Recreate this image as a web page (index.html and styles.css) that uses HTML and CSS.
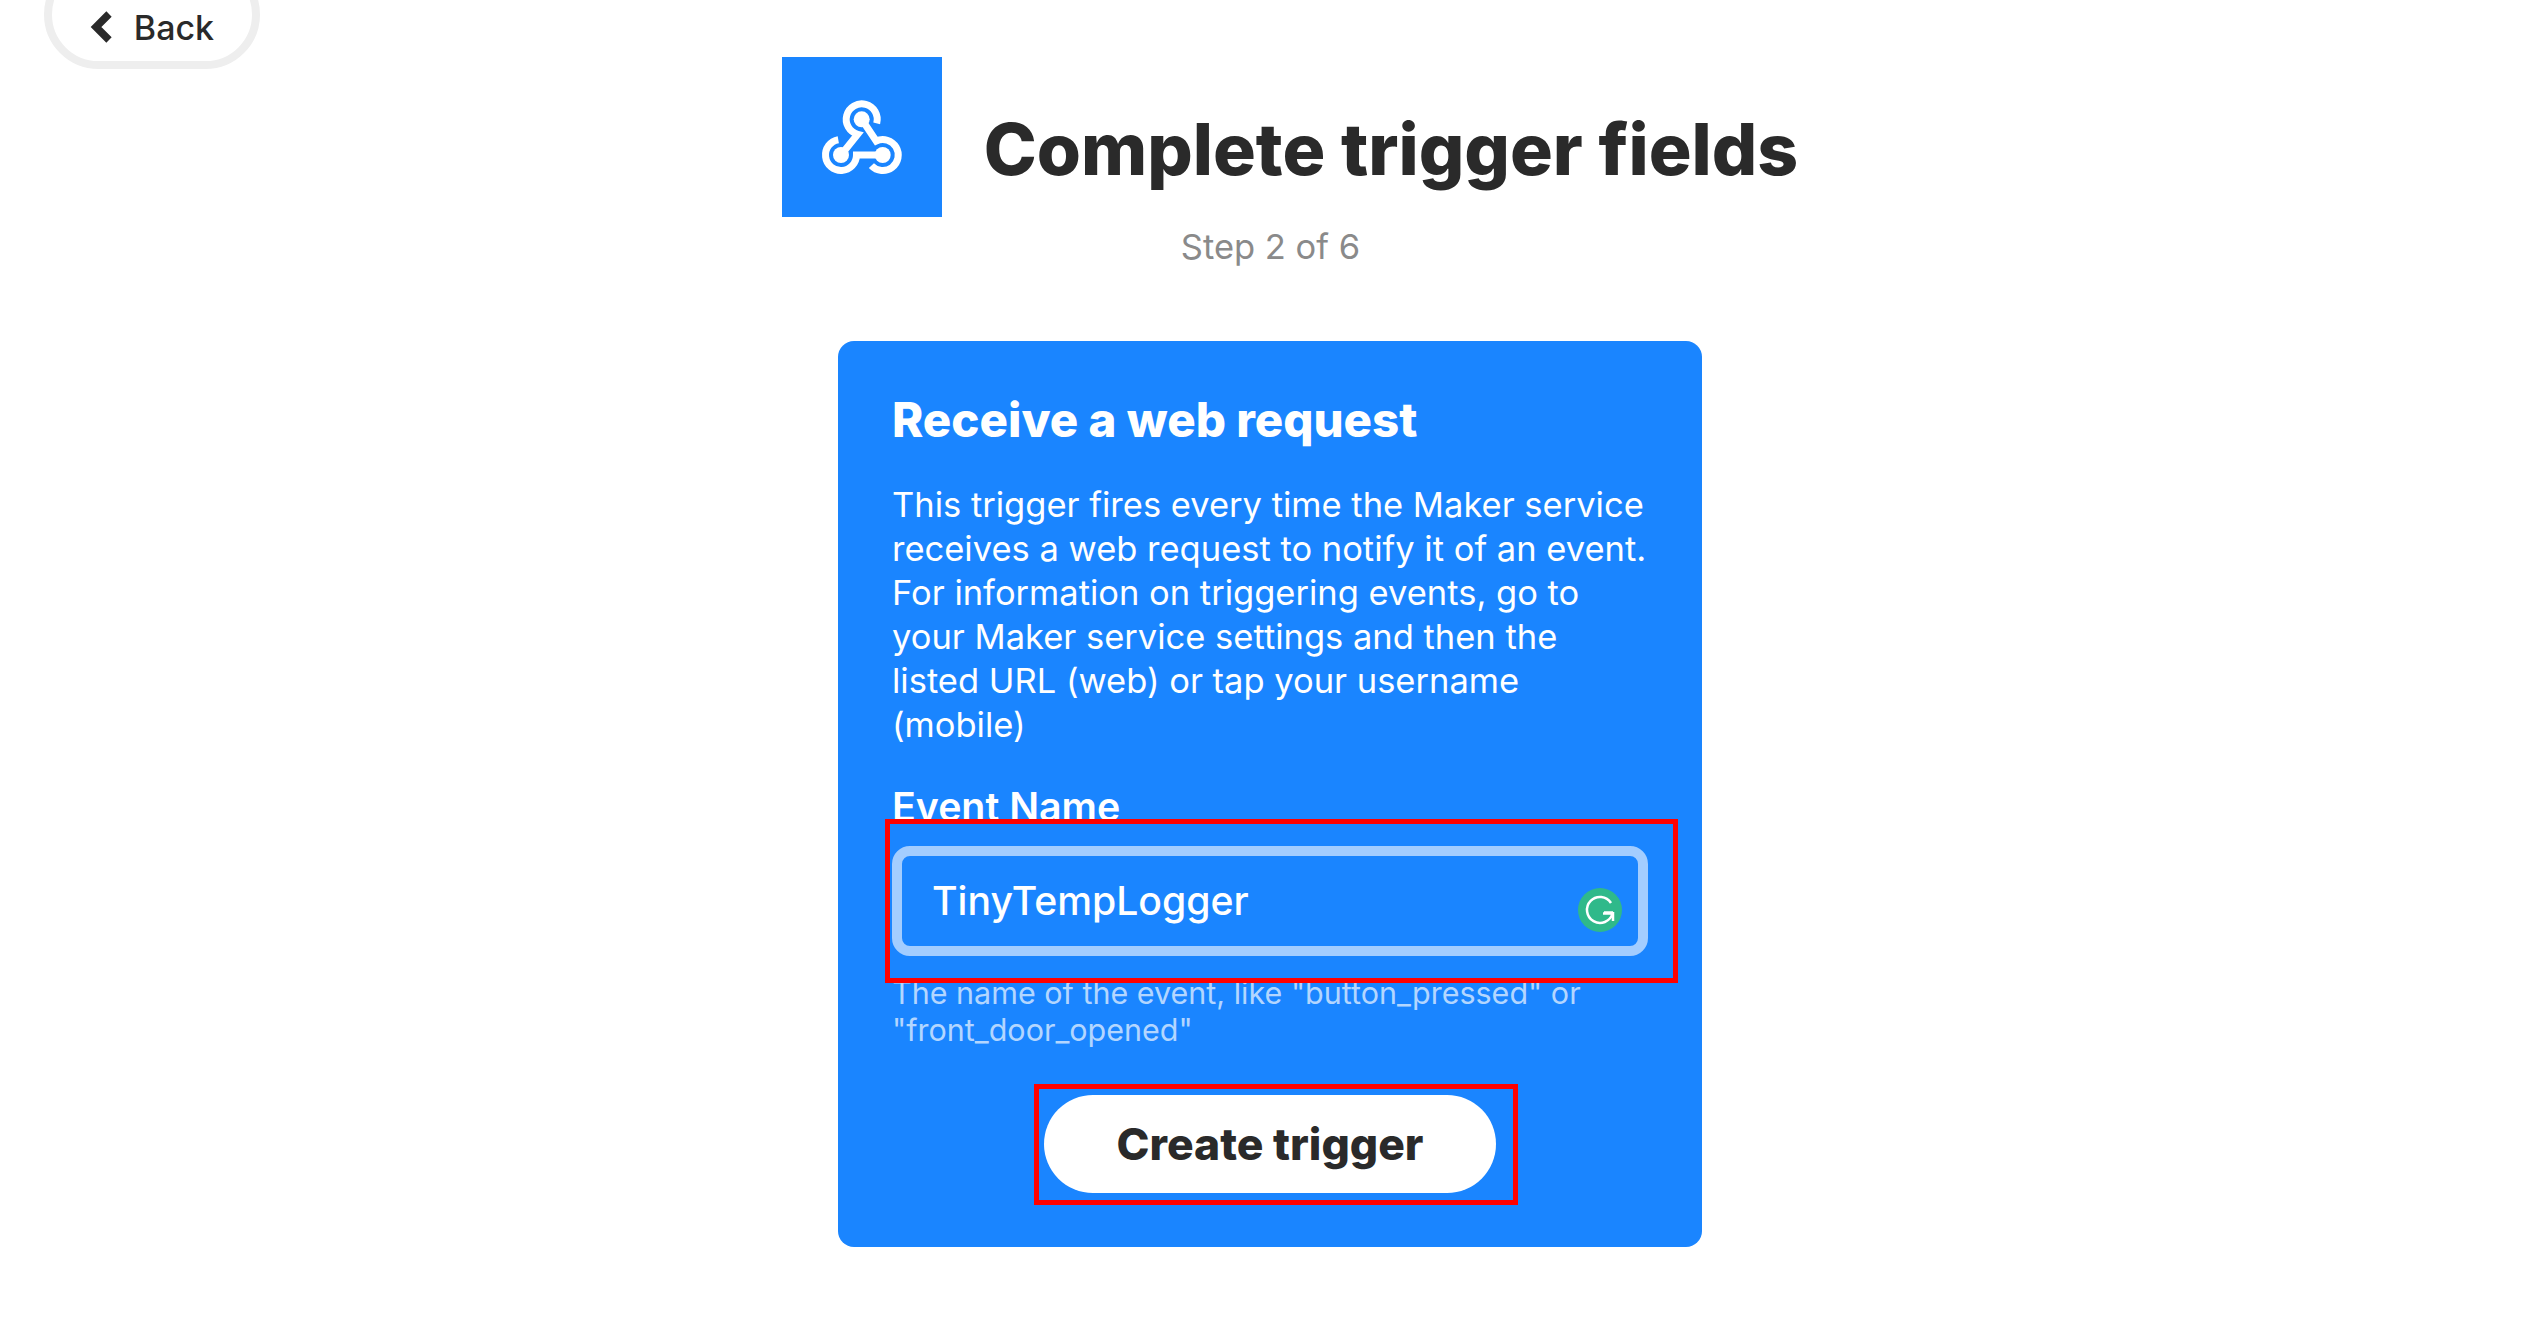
FILE: index.html
```html
<!DOCTYPE html>
<html lang="en">
<head>
<meta charset="utf-8">
<title>Complete trigger fields</title>
<link rel="stylesheet" href="styles.css">
</head>
<body>
<div class="page">
  <div class="topbar">
    <a class="back">
      <svg class="back-icon" viewBox="0 0 24 34"><path d="M19 4 6 17l13 13" fill="none" stroke="#2a2a2a" stroke-width="7.500"/></svg>
      <span>Back</span>
    </a>
  </div>
  <header class="header">
    <div class="service-icon">
      <svg viewBox="0 0 160 160" width="160" height="160">
        <g fill="none" stroke="#fff" stroke-width="7">
          <path d="M94.7 66.3A15.5 15.5 0 1 0 75.7 77.3L59 98"/>
          <path d="M79.7 62.3 94.2 84A15.5 15.5 0 1 1 89.4 108.6"/>
          <path d="M100.7 98H74.5A15.5 15.5 0 1 1 56.3 82.7"/>
        </g>
        <g fill="#fff">
          <circle cx="79.7" cy="62.3" r="8"/>
          <circle cx="59" cy="98" r="8"/>
          <circle cx="100.7" cy="98" r="8"/>
        </g>
      </svg>
    </div>
    <h1 class="title">Complete trigger fields</h1>
  </header>
  <p class="step">Step 2 of 6</p>
  <main class="card">
    <h2 class="card-title">Receive a web request</h2>
    <p class="card-text">This trigger fires every time the Maker service<br>receives a web request to notify it of an event.<br>For information on triggering events, go to<br>your Maker service settings and then the<br>listed URL (web) or tap your username<br>(mobile)</p>
    <div class="field-label">Event Name</div>
    <div class="input-wrap">
      <div class="input">TinyTempLogger
        <svg class="grammarly" viewBox="0 0 44 44"><circle cx="22" cy="22" r="22" fill="#2fb98a"/><path d="M33 15A13 13 0 1 0 34.5 25.500H25" fill="none" stroke="#fff" stroke-width="2.500"/><path d="M35 24v9M26 24.500h9" fill="none" stroke="#fff" stroke-width="2.500"/></svg>
      </div>
      <span class="mark mark-input"></span>
    </div>
    <p class="hint">The name of the event, like "button_pressed" or<br>"front_door_opened"</p>
    <div class="button-row">
      <div class="button-wrap">
        <button class="create">Create trigger</button>
        <span class="mark mark-button"></span>
      </div>
    </div>
  </main>
</div>
</body>
</html>
```
FILE: styles.css
```css
* { box-sizing: border-box; }
html, body { margin: 0; height: 100%; background: #fff; overflow: hidden; }
body { font-family: Inter, "Noto Sans", sans-serif; color: #2a2a2a; }
.page { display: flex; flex-direction: column; align-items: center; width: 100%; }
.topbar { width: 100%; height: 57px; padding-left: 44px; }
.back { display: flex; align-items: center; justify-content: center; gap: 20px; width: 216px; height: 109px; margin-top: -40px; padding-top: 25px; border: 8px solid #eee; border-radius: 55px; font-size: 34px; font-weight: 500; background: #fff; position: relative; }
.back-icon { width: 24px; height: 34px; }
.header { display: flex; align-items: center; gap: 42px; padding-left: 39px; height: 160px; }
.service-icon { width: 160px; height: 160px; background: #1a85ff; }
.service-icon svg { display: block; }
.title { margin: 26px 0 0; font-size: 71.4px; font-weight: 800; line-height: 1; white-space: nowrap; color: #2a2a2a; }
.step { margin: 10px 0 0; height: 40px; font-size: 34.5px; line-height: 40px; color: #8a8a8a; }
.card { width: 864px; height: 906px; margin: 74px 1px 0 0; padding: 49px 33px 0 54px; background: #1a85ff; border-radius: 16px; color: #fff; position: relative; }
.card-title { margin: 0; font-size: 47.4px; font-weight: 800; line-height: 60px; white-space: nowrap; }
.card-text { margin: 33px 0 0; font-size: 34.5px; line-height: 44px; white-space: nowrap; }
.field-label { margin-top: 38px; font-size: 39.3px; font-weight: 600; line-height: 44px; }
.input-wrap { position: relative; width: 756px; margin-top: 17px; }
.input { position: relative; height: 110px; padding-left: 30px; border: 10px solid #a3cdff; border-radius: 18px; font-size: 39.2px; font-weight: 500; line-height: 90px; background: #1a85ff; }
.grammarly { position: absolute; left: 676px; top: 32px; width: 44px; height: 44px; }
.mark { position: absolute; border: 5px solid #f00; pointer-events: none; }
.mark-input { top: -27px; left: -7px; right: -30px; bottom: -27px; z-index: 2; }
.hint { margin: 18px 0 0; font-size: 30.5px; line-height: 37px; color: #b3d6ff; white-space: nowrap; }
.button-row { display: flex; margin-top: 47px; padding-left: 152px; }
.button-wrap { position: relative; }
.create { display: block; width: 452px; height: 98px; border: 0; border-radius: 49px; background: #fff; color: #2a2a2a; font: 800 44.4px Inter, sans-serif; }
.mark-button { top: -11px; left: -10px; right: -22px; bottom: -12px; }
```
